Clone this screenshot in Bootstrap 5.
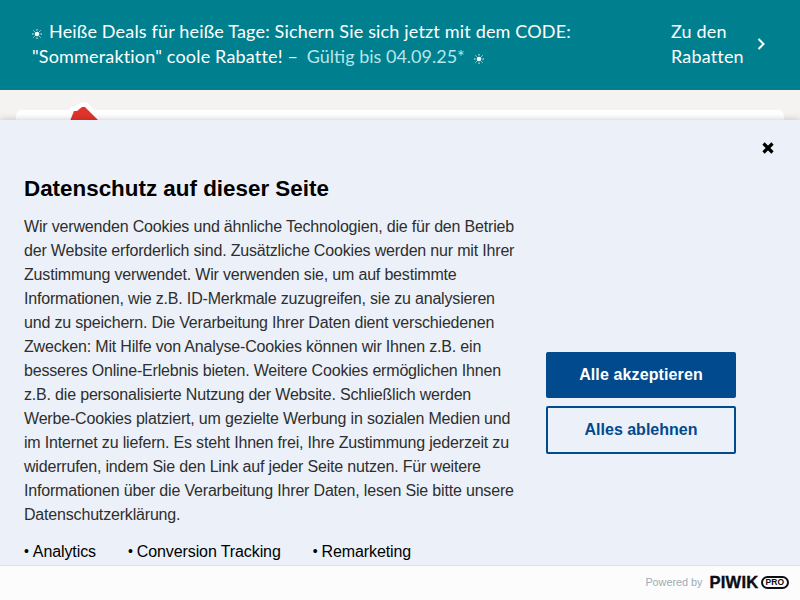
<!DOCTYPE html>
<html lang="de">
<head>
<meta charset="utf-8">
<title>Datenschutz</title>
<link href="https://cdn.jsdelivr.net/npm/bootstrap@5.3.0/dist/css/bootstrap.min.css" rel="stylesheet">
<style>
html,body{height:600px;overflow:hidden}
body{background:#f4f3f1;position:relative;font-family:"Liberation Sans",Arial,sans-serif}
.promo{background:#00808f;color:#fff;height:90px;padding:0 32px 2px;font-family:Lato,sans-serif;font-size:18px;line-height:25px;letter-spacing:.17px}
.promo-text{width:600px}
.promo-valid{color:#b5e6ea;letter-spacing:0;margin-left:4px}
.sun{width:10px;height:10px;vertical-align:-1px;margin-right:7px}
.sun-end{margin:0 0 0 9px}
.promo-cta{width:74px;margin-left:39px}
.promo-chev{margin-left:12px;width:8px;height:12px}
.page-top{margin:20px 16px 0;height:40px;background:#fff;border-radius:6px 6px 0 0;position:relative}
.house{position:absolute;left:50px;top:-6px;width:36px;height:18px;overflow:visible}
.consent{position:absolute;left:0;right:0;top:120px;bottom:0;background:#ecf1f9;box-shadow:0 0 7px rgba(0,0,0,.22)}
.consent-body{height:445px;padding:0 24px}
.consent-close{position:absolute;right:25px;top:21px;width:14px;height:14px;padding:0;border:0;background:none;line-height:0}
.consent-copy{width:494px;padding-top:55px;color:#2e2e2e}
.consent-title{font-size:22.4px;font-weight:700;line-height:27px;color:#000;margin:0 0 13px}
.consent-text{font-size:16px;line-height:24px;margin:0 0 12px;letter-spacing:-.18px}
.purposes{color:#000;font-size:16px;line-height:24px;gap:32px;letter-spacing:-.1px}
.purposes span::before{content:"•";font-size:14px;margin-right:4px;vertical-align:1px}
.consent-actions{width:190px;margin-left:28px;padding-top:232px;flex:none}
.btn-accept,.btn-reject{display:block;width:190px;padding:0;font-size:16px;font-weight:700;border-radius:2px;border:2px solid #004a8d}
.btn-accept{background:#004a8d;color:#fff;height:46px;margin-bottom:8px;letter-spacing:.12px}
.btn-reject{background:transparent;color:#004a8d;height:48px}
.consent-foot{height:35px;background:#fcfcfc;border-top:1px solid #dde2e8;padding:0 11px 2px 0}
.powered{font-size:10.8px;color:#9dabb6;margin-right:7px}
.piwik{font-weight:700;font-size:16.5px;color:#0d0d14;letter-spacing:.3px;line-height:1;-webkit-text-stroke:.4px #0d0d14}
.pro{font-size:8.5px;font-weight:700;color:#0d0d14;border:2px solid #0d0d14;border-radius:7px;padding:0 3px;line-height:9px;margin-left:2px}
</style>
</head>
<body>
<svg width="0" height="0" class="position-absolute" aria-hidden="true"><symbol id="sunmark" viewBox="0 0 10 10"><circle cx="5" cy="5" r="2.3" fill="#fff"/><path d="M5 0v1.6M5 8.4V10M0 5h1.6M8.4 5H10M1.5 1.5l1.1 1.1M7.4 7.4l1.1 1.1M8.5 1.5L7.4 2.6M2.6 7.4L1.5 8.5" stroke="#fff" stroke-width=".9"/></symbol></svg>
<div class="promo d-flex align-items-center">
  <div class="promo-text"><svg class="sun" aria-hidden="true"><use href="#sunmark"/></svg>Heiße Deals für heiße Tage: Sichern Sie sich jetzt mit dem CODE: "Sommeraktion" coole Rabatte! – <span class="promo-valid">Gültig bis 04.09.25*</span><svg class="sun sun-end" aria-hidden="true"><use href="#sunmark"/></svg></div>
  <div class="promo-cta">Zu den Rabatten</div>
  <svg class="promo-chev" viewBox="0 0 8 12" aria-hidden="true"><path d="M1.5 1l5 5-5 5" fill="none" stroke="#fff" stroke-width="2"/></svg>
</div>
<div class="page-top">
  <svg class="house" viewBox="0 0 36 18" aria-hidden="true"><path d="M4 17L8 7h3l5-4h3l13 13z" fill="#e0342b" stroke="#fff" stroke-width="9" stroke-linejoin="round" paint-order="stroke"/></svg>
</div>
<div class="consent">
  <button class="consent-close" type="button" aria-label="Schließen"><svg viewBox="0 0 14 14" width="14" height="14"><path d="M2.5 2.5l9 9M11.5 2.5l-9 9" stroke="#000" stroke-width="3.2" fill="none"/></svg></button>
  <div class="consent-body d-flex">
    <div class="consent-copy">
      <h2 class="consent-title">Datenschutz auf dieser Seite</h2>
      <p class="consent-text">Wir verwenden Cookies und ähnliche Technologien, die für den Betrieb der Website erforderlich sind. Zusätzliche Cookies werden nur mit Ihrer Zustimmung verwendet. Wir verwenden sie, um auf bestimmte Informationen, wie z.B. ID-Merkmale zuzugreifen, sie zu analysieren und zu speichern. Die Verarbeitung Ihrer Daten dient verschiedenen Zwecken: Mit Hilfe von Analyse-Cookies können wir Ihnen z.B. ein besseres Online-Erlebnis bieten. Weitere Cookies ermöglichen Ihnen z.B. die personalisierte Nutzung der Website. Schließlich werden Werbe-Cookies platziert, um gezielte Werbung in sozialen Medien und im Internet zu liefern. Es steht Ihnen frei, Ihre Zustimmung jederzeit zu widerrufen, indem Sie den Link auf jeder Seite nutzen. Für weitere Informationen über die Verarbeitung Ihrer Daten, lesen Sie bitte unsere Datenschutzerklärung.</p>
      <div class="purposes d-flex"><span>Analytics</span><span>Conversion Tracking</span><span>Remarketing</span></div>
    </div>
    <div class="consent-actions">
      <button class="btn btn-accept" type="button">Alle akzeptieren</button>
      <button class="btn btn-reject" type="button">Alles ablehnen</button>
    </div>
  </div>
  <div class="consent-foot d-flex align-items-center justify-content-end">
    <span class="powered">Powered by</span><span class="piwik">PIWIK</span><span class="pro">PRO</span>
  </div>
</div>
<script src="https://cdn.jsdelivr.net/npm/bootstrap@5.3.0/dist/js/bootstrap.bundle.min.js"></script>
</body>
</html>
